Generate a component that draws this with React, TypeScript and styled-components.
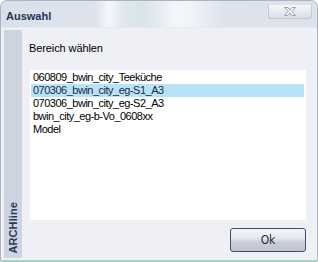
import React, { useState } from 'react';
import styled, { createGlobalStyle } from 'styled-components';

const GlobalStyle = createGlobalStyle`
  html, body {
    margin: 0;
    padding: 0;
    background: #ffffff;
  }
  body {
    font-family: "Liberation Sans", Arial, sans-serif;
  }
`;

const Window = styled.div`
  width: 318px;
  height: 262px;
  box-sizing: border-box;
  display: flex;
  flex-direction: column;
  border: 1px solid #a9b4c4;
  border-bottom: 2px solid #9ed3c6;
  border-radius: 7px 7px 2px 2px;
  background: #eef0f6;
  overflow: hidden;
`;

const TitleBar = styled.div`
  height: 26px;
  flex: none;
  display: flex;
  align-items: center;
  justify-content: space-between;
  padding: 0 5px 0 5px;
  background: linear-gradient(
    90deg,
    #d9e0ea 0%,
    #dde4ed 30%,
    #f6f8fb 34%,
    #dfe6ee 39%,
    #d8e6e6 44%,
    #e3e9f0 49%,
    #f4f7fa 55%,
    #f0f3f7 60%,
    #dee4ed 70%,
    #dbe2ec 100%
  );
  border-bottom: 1px solid #e6eaf0;
`;

const Title = styled.span`
  font-size: 11px;
  font-weight: bold;
  color: #1f3459;
  margin-top: 3px;
`;

const CloseButton = styled.div`
  align-self: flex-start;
  width: 42px;
  height: 13px;
  margin-top: 3px;
  display: flex;
  align-items: center;
  justify-content: center;
  border: 1px solid #c3c9d2;
  border-top-color: #dfe3e8;
  border-radius: 0 0 3px 3px;
  background: linear-gradient(180deg, #f6f7f9 0%, #e6e9ee 55%, #d9dde4 100%);
`;

const Body = styled.div`
  flex: 1;
  display: flex;
  padding: 2px 11px 2px 3px;
`;

const Sidebar = styled.div`
  width: 18px;
  flex: none;
  display: flex;
  flex-direction: column;
  justify-content: flex-end;
  align-items: center;
  background: #cdd3df;
  padding-bottom: 4px;
  box-sizing: border-box;
`;

const SideLabel = styled.span`
  writing-mode: vertical-rl;
  transform: rotate(180deg);
  font-size: 11px;
  font-weight: bold;
  color: #2c3b5c;
  letter-spacing: 0.1px;
`;

const Content = styled.div`
  flex: 1;
  display: flex;
  flex-direction: column;
  padding: 12px 0 0 7px;
`;

const Label = styled.div`
  font-size: 11px;
  line-height: 13px;
  color: #000;
  letter-spacing: -0.1px;
`;

const ListBox = styled.div`
  margin: 15px 0 0 1px;
  height: 150px;
  background: #ffffff;
  padding: 1px;
  box-sizing: border-box;
`;

const Row = styled.div<{ selected?: boolean }>`
  height: 13px;
  line-height: 13px;
  font-size: 11px;
  letter-spacing: -0.5px;
  padding-left: 2px;
  white-space: nowrap;
  color: ${p => (p.selected ? '#1c2b44' : '#000')};
  background: ${p => (p.selected ? '#b9e2f8' : 'transparent')};
  margin-right: 1px;
  cursor: default;
`;

const Footer = styled.div`
  display: flex;
  justify-content: flex-end;
  margin-top: 8px;
`;

const OkButton = styled.button`
  width: 76px;
  height: 24px;
  border: 1px solid #3d4c6c;
  border-radius: 3px;
  background: linear-gradient(180deg, #f4f5f8 0%, #e6e9ee 40%, #c9ced8 60%, #bfc5cf 100%);
  font-family: "DejaVu Sans Condensed", "Liberation Sans", sans-serif;
  font-size: 12px;
  color: #1d2940;
  padding: 0;
  cursor: pointer;
`;

const items = [
  '060809_bwin_city_Teeküche',
  '070306_bwin_city_eg-S1_A3',
  '070306_bwin_city_eg-S2_A3',
  'bwin_city_eg-b-Vo_0608xx',
  'Model',
];

const CloseIcon = () => (
  <svg width="16" height="11" viewBox="0 0 16 11">
    <path
      d="M2.5 1.5 L6 1.5 L8 4 L10 1.5 L13.5 1.5 L9.8 5.5 L13.5 9.5 L10 9.5 L8 7 L6 9.5 L2.5 9.5 L6.2 5.5 Z"
      fill="#f8f9fb"
      stroke="#9aa1ab"
      strokeWidth="1"
      strokeLinejoin="round"
    />
  </svg>
);

export default function App() {
  const [selected, setSelected] = useState(1);
  return (
    <>
      <GlobalStyle />
      <Window>
        <TitleBar>
          <Title>Auswahl</Title>
          <CloseButton>
            <CloseIcon />
          </CloseButton>
        </TitleBar>
        <Body>
          <Sidebar>
            <SideLabel>ARCHline</SideLabel>
          </Sidebar>
          <Content>
            <Label>Bereich wählen</Label>
            <ListBox>
              {items.map((item, i) => (
                <Row key={item} selected={i === selected} onClick={() => setSelected(i)}>
                  {item}
                </Row>
              ))}
            </ListBox>
            <Footer>
              <OkButton>Ok</OkButton>
            </Footer>
          </Content>
        </Body>
      </Window>
    </>
  );
}
